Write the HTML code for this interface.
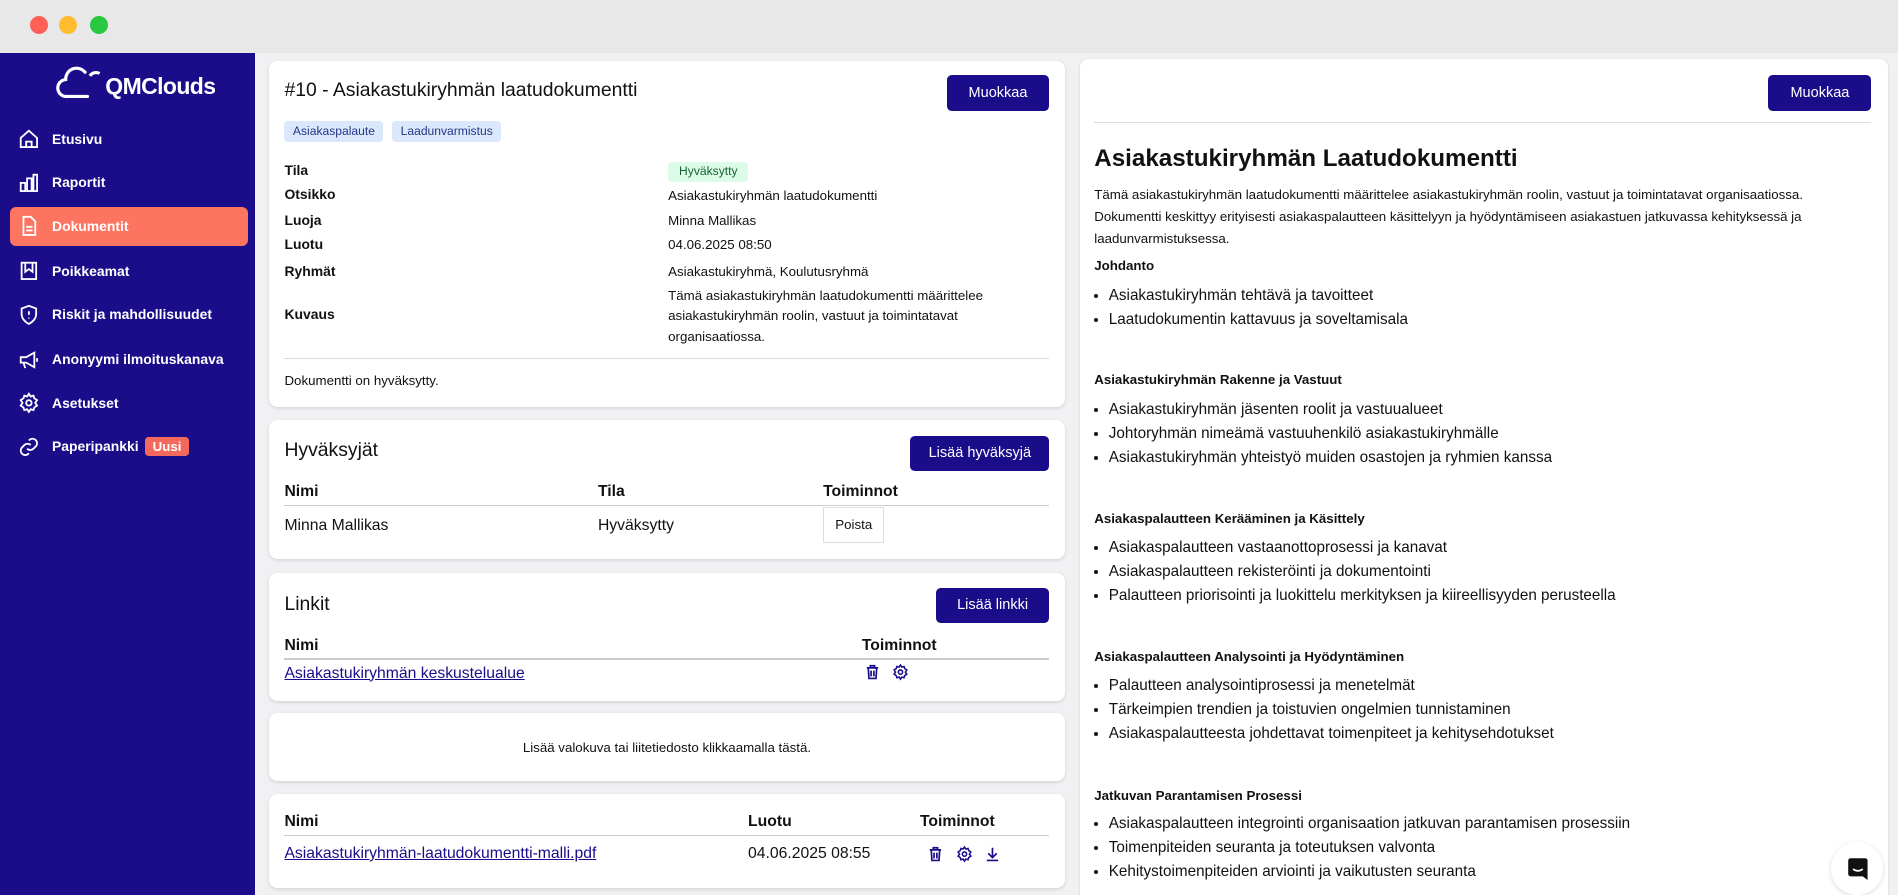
<!DOCTYPE html>
<html><head><meta charset="utf-8">
<style>
html{margin:0;padding:0;width:1898px;height:894px;overflow:hidden;background:#f1f1f3}
body{margin:0;padding:0;width:1568px;height:739px;zoom:1.21046;overflow:hidden;background:#f1f1f3;font-family:"Liberation Sans",sans-serif;color:#111;position:relative}
.abs{position:absolute}
.top{left:0;top:0;width:1568px;height:44px;background:#e8e8e8}
.dot{position:absolute;top:13px;width:15px;height:15px;border-radius:50%}
.side{left:0;top:44px;width:211px;height:695px;background:#1b0c8a}
.nav{position:absolute;left:8px;width:197px;height:32px;border-radius:5px;color:#fff;font-weight:bold;font-size:11.5px;line-height:32px}
.nav span{position:absolute;left:35px}
.nav svg{position:absolute;left:7px;top:7px}
.card{position:absolute;background:#fff;border-radius:7px;box-shadow:0 1px 3px rgba(0,0,0,.12)}
.btn{position:absolute;background:#1b0c8a;color:#fff;font-size:12px;border-radius:4px;text-align:center}
.lbl{position:absolute;left:13px;font-weight:bold;font-size:11.5px}
.val{position:absolute;left:330px;font-size:11px}
.th{position:absolute;font-weight:bold;font-size:13px}
.td{position:absolute;font-size:13px}
a{color:#1b0c8a}
.r .h{position:absolute;left:12px;font-weight:bold;font-size:11px}
.r ul{position:absolute;left:0;margin:0;padding-left:24px;font-size:12.6px;line-height:19.7px;width:640px}
</style></head><body>
<div class="abs top">
<div class="dot" style="left:25px;background:#fe5f57"></div>
<div class="dot" style="left:49px;background:#febc2e"></div>
<div class="dot" style="left:74px;background:#28c840"></div>
</div>
<div class="abs side">
<svg class="abs" style="left:46px;top:10px" width="130" height="30" viewBox="0 0 130 30"><path d="M26 26H9a7 7 0 0 1-1-14 9 9 0 0 1 16-6" fill="none" stroke="#fff" stroke-width="2.6" stroke-linecap="round"/><path d="M28 9a6 6 0 0 1 8-2" fill="none" stroke="#fff" stroke-width="2.6"/></svg>
<div class="abs" style="left:87px;top:16px;color:#fff;font-size:19px;font-weight:bold;letter-spacing:-0.5px">QMClouds</div>
<div class="abs" style="left:0;top:0;width:211px">
<div class="nav" style="top:55px"><svg width="18" height="18" viewBox="0 0 24 24" fill="none" stroke="#fff" stroke-width="2"><path d="M3 11l9-8 9 8v10H3z"/><path d="M9 21v-6h6v6"/></svg><span>Etusivu</span></div>
<div class="nav" style="top:91px"><svg width="18" height="18" viewBox="0 0 24 24" fill="none" stroke="#fff" stroke-width="2"><rect x="3" y="12" width="5" height="9"/><rect x="10" y="7" width="5" height="14"/><rect x="17" y="3" width="4" height="18"/></svg><span>Raportit</span></div>
<div class="nav" style="top:127px;background:#fd7461"><svg width="18" height="18" viewBox="0 0 24 24" fill="none" stroke="#fff" stroke-width="2"><path d="M6 2h8l5 5v15H6z"/><path d="M9 13h7M9 17h7"/></svg><span>Dokumentit</span></div>
<div class="nav" style="top:164px"><svg width="18" height="18" viewBox="0 0 24 24" fill="none" stroke="#fff" stroke-width="2"><rect x="4" y="3" width="16" height="18"/><path d="M8 3v10l4-3 4 3V3"/></svg><span>Poikkeamat</span></div>
<div class="nav" style="top:200px"><svg width="18" height="18" viewBox="0 0 24 24" fill="none" stroke="#fff" stroke-width="2"><path d="M12 2l8 3v6c0 5-4 9-8 11-4-2-8-6-8-11V5z"/><path d="M12 8v4M12 15v1"/></svg><span>Riskit ja mahdollisuudet</span></div>
<div class="nav" style="top:237px"><svg width="18" height="18" viewBox="0 0 24 24" fill="none" stroke="#fff" stroke-width="2"><path d="M3 9h6l9-5v16l-9-5H3z"/><path d="M6 15l2 6"/><path d="M21 10v4"/></svg><span>Anonyymi ilmoituskanava</span></div>
<div class="nav" style="top:273px"><svg width="18" height="18" viewBox="0 0 24 24" fill="none" stroke="#fff" stroke-width="2"><circle cx="12" cy="12" r="3"/><path d="M12 2l2 3 3-1 1 3 3 2-2 3 2 3-3 2-1 3-3-1-2 3-2-3-3 1-1-3-3-2 2-3-2-3 3-2 1-3 3 1z"/></svg><span>Asetukset</span></div>
<div class="nav" style="top:309px"><svg width="18" height="18" viewBox="0 0 24 24" fill="none" stroke="#fff" stroke-width="2"><path d="M10 14a5 5 0 0 0 7 0l3-3a5 5 0 0 0-7-7l-1 1"/><path d="M14 10a5 5 0 0 0-7 0l-3 3a5 5 0 0 0 7 7l1-1"/></svg><span>Paperipankki</span><div style="position:absolute;left:112px;top:8px;width:36px;height:16px;background:#f4695e;border-radius:3px;font-size:11px;line-height:16px;text-align:center">Uusi</div></div>
</div>
</div>

<div class="card" style="left:222px;top:50px;width:658px;height:286px">
<div class="abs" style="left:13px;top:15px;font-size:16px">#10 - Asiakastukiryhmän laatudokumentti</div>
<div class="btn" style="left:560px;top:12px;width:85px;height:30px;line-height:30px">Muokkaa</div>
<div class="abs" style="left:13px;top:50px;height:17px;padding:0 7px;background:#dbe7fa;color:#23388a;font-size:10px;line-height:17px;border-radius:3px">Asiakaspalaute</div>
<div class="abs" style="left:102px;top:50px;height:17px;padding:0 7px;background:#dbe7fa;color:#23388a;font-size:10px;line-height:17px;border-radius:3px">Laadunvarmistus</div>
<div class="lbl" style="top:84px">Tila</div>
<div class="lbl" style="top:104px">Otsikko</div>
<div class="lbl" style="top:125px">Luoja</div>
<div class="lbl" style="top:145px">Luotu</div>
<div class="lbl" style="top:167px">Ryhmät</div>
<div class="lbl" style="top:203px">Kuvaus</div>
<div class="val" style="top:84px;height:16px;line-height:16px;padding:0 9px;background:#dcfce7;color:#166534;font-size:10px;border-radius:3px">Hyväksytty</div>
<div class="val" style="top:105px">Asiakastukiryhmän laatudokumentti</div>
<div class="val" style="top:126px">Minna Mallikas</div>
<div class="val" style="top:146px">04.06.2025 08:50</div>
<div class="val" style="top:168px">Asiakastukiryhmä, Koulutusryhmä</div>
<div class="val" style="top:186px;line-height:17px">Tämä asiakastukiryhmän laatudokumentti määrittelee<br>asiakastukiryhmän roolin, vastuut ja toimintatavat<br>organisaatiossa.</div>
<div class="abs" style="left:13px;top:246px;width:632px;height:1px;background:#ddd"></div>
<div class="abs" style="left:13px;top:258px;font-size:11px">Dokumentti on hyväksytty.</div>
</div>

<div class="card" style="left:222px;top:347px;width:658px;height:115px">
<div class="abs" style="left:13px;top:16px;font-size:16px">Hyväksyjät</div>
<div class="btn" style="left:530px;top:13px;width:115px;height:29px;line-height:29px">Lisää hyväksyjä</div>
<div class="th" style="left:13px;top:52px">Nimi</div>
<div class="th" style="left:272px;top:52px">Tila</div>
<div class="th" style="left:458px;top:52px">Toiminnot</div>
<div class="abs" style="left:13px;top:70px;width:632px;height:1px;background:#ccc"></div>
<div class="td" style="left:13px;top:80px">Minna Mallikas</div>
<div class="td" style="left:272px;top:80px">Hyväksytty</div>
<div class="abs" style="left:458px;top:72px;width:49px;height:28px;border:1px solid #ddd;font-size:11px;line-height:28px;text-align:center">Poista</div>
</div>

<div class="card" style="left:222px;top:473px;width:658px;height:106px">
<div class="abs" style="left:13px;top:17px;font-size:16px">Linkit</div>
<div class="btn" style="left:551px;top:13px;width:94px;height:29px;line-height:29px">Lisää linkki</div>
<div class="th" style="left:13px;top:53px">Nimi</div>
<div class="th" style="left:490px;top:53px">Toiminnot</div>
<div class="abs" style="left:13px;top:71px;width:632px;height:1px;background:#ccc"></div>
<div class="td" style="left:13px;top:76px"><a href="#">Asiakastukiryhmän keskustelualue</a></div>
<svg class="abs" style="left:492px;top:75px" width="14" height="15" viewBox="0 0 24 24" fill="none" stroke="#1b0c8a" stroke-width="2.4"><path d="M4 6h16M9 6V3h6v3M6 6l1 15h10l1-15M10 10v8M14 10v8"/></svg>
<svg class="abs" style="left:515px;top:75px" width="14" height="15" viewBox="0 0 24 24" fill="none" stroke="#1b0c8a" stroke-width="2.2"><circle cx="12" cy="12" r="3"/><path d="M12 2l2 3 3-1 1 3 3 2-2 3 2 3-3 2-1 3-3-1-2 3-2-3-3 1-1-3-3-2 2-3-2-3 3-2 1-3 3 1z"/></svg>
</div>

<div class="card" style="left:222px;top:589px;width:658px;height:56px">
<div class="abs" style="left:0;width:658px;top:22px;text-align:center;font-size:11px">Lisää valokuva tai liitetiedosto klikkaamalla tästä.</div>
</div>

<div class="card" style="left:222px;top:656px;width:658px;height:78px">
<div class="th" style="left:13px;top:16px">Nimi</div>
<div class="th" style="left:396px;top:16px">Luotu</div>
<div class="th" style="left:538px;top:16px">Toiminnot</div>
<div class="abs" style="left:13px;top:34px;width:632px;height:1px;background:#ccc"></div>
<div class="td" style="left:13px;top:42px"><a href="#">Asiakastukiryhmän-laatudokumentti-malli.pdf</a></div>
<div class="td" style="left:396px;top:42px">04.06.2025 08:55</div>
<svg class="abs" style="left:544px;top:42px" width="14" height="15" viewBox="0 0 24 24" fill="none" stroke="#1b0c8a" stroke-width="2.4"><path d="M4 6h16M9 6V3h6v3M6 6l1 15h10l1-15M10 10v8M14 10v8"/></svg>
<svg class="abs" style="left:568px;top:42px" width="14" height="15" viewBox="0 0 24 24" fill="none" stroke="#1b0c8a" stroke-width="2.2"><circle cx="12" cy="12" r="3"/><path d="M12 2l2 3 3-1 1 3 3 2-2 3 2 3-3 2-1 3-3-1-2 3-2-3-3 1-1-3-3-2 2-3-2-3 3-2 1-3 3 1z"/></svg>
<svg class="abs" style="left:591px;top:42px" width="14" height="15" viewBox="0 0 24 24" fill="none" stroke="#1b0c8a" stroke-width="2.4"><path d="M12 3v13M6 11l6 6 6-6M4 21h16"/></svg>
</div>

<div class="card r" style="left:892px;top:49px;width:668px;height:690px;border-radius:7px 7px 0 0">
<div class="btn" style="left:569px;top:13px;width:85px;height:30px;line-height:30px">Muokkaa</div>
<div class="abs" style="left:12px;top:52px;width:642px;height:1px;background:#ddd"></div>
<div class="abs" style="left:12px;top:71px;font-size:20px;font-weight:bold">Asiakastukiryhmän Laatudokumentti</div>
<div class="abs" style="left:12px;top:103px;font-size:11px;line-height:18px;white-space:nowrap">Tämä asiakastukiryhmän laatudokumentti määrittelee asiakastukiryhmän roolin, vastuut ja toimintatavat organisaatiossa.<br>Dokumentti keskittyy erityisesti asiakaspalautteen käsittelyyn ja hyödyntämiseen asiakastuen jatkuvassa kehityksessä ja<br>laadunvarmistuksessa.</div>
<div class="h" style="top:164px">Johdanto</div>
<ul style="top:186px"><li>Asiakastukiryhmän tehtävä ja tavoitteet</li><li>Laatudokumentin kattavuus ja soveltamisala</li></ul>
<div class="h" style="top:258px">Asiakastukiryhmän Rakenne ja Vastuut</div>
<ul style="top:280px"><li>Asiakastukiryhmän jäsenten roolit ja vastuualueet</li><li>Johtoryhmän nimeämä vastuuhenkilö asiakastukiryhmälle</li><li>Asiakastukiryhmän yhteistyö muiden osastojen ja ryhmien kanssa</li></ul>
<div class="h" style="top:373px">Asiakaspalautteen Kerääminen ja Käsittely</div>
<ul style="top:394px"><li>Asiakaspalautteen vastaanottoprosessi ja kanavat</li><li>Asiakaspalautteen rekisteröinti ja dokumentointi</li><li>Palautteen priorisointi ja luokittelu merkityksen ja kiireellisyyden perusteella</li></ul>
<div class="h" style="top:487px">Asiakaspalautteen Analysointi ja Hyödyntäminen</div>
<ul style="top:508px"><li>Palautteen analysointiprosessi ja menetelmät</li><li>Tärkeimpien trendien ja toistuvien ongelmien tunnistaminen</li><li>Asiakaspalautteesta johdettavat toimenpiteet ja kehitysehdotukset</li></ul>
<div class="h" style="top:602px">Jatkuvan Parantamisen Prosessi</div>
<ul style="top:622px"><li>Asiakaspalautteen integrointi organisaation jatkuvan parantamisen prosessiin</li><li>Toimenpiteiden seuranta ja toteutuksen valvonta</li><li>Kehitystoimenpiteiden arviointi ja vaikutusten seuranta</li></ul>
</div>
<div class="abs" style="left:1513px;top:696px;width:43px;height:43px;border-radius:50%;background:#fff;box-shadow:0 1px 4px rgba(0,0,0,.15)">
<svg style="position:absolute;left:13px;top:12px" width="18" height="20" viewBox="0 0 18 20"><path d="M1 3a2 2 0 0 1 2-2h12a2 2 0 0 1 2 2v16l-4-3H3a2 2 0 0 1-2-2z" fill="#111"/><path d="M5 10q4 3 8 0" stroke="#fff" stroke-width="1.4" fill="none"/></svg>
</div>
</body></html>
